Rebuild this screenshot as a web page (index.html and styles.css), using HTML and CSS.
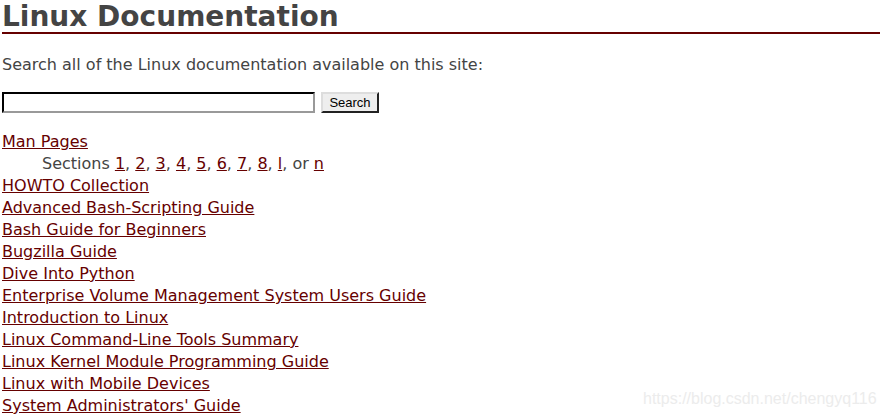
FILE: index.html
```html
<!DOCTYPE html>
<html>
<head>
<meta charset="utf-8">
<title>Linux Documentation</title>
<link rel="stylesheet" href="styles.css">
</head>
<body>
<h1 class="title">Linux Documentation</h1>
<p class="intro">Search all of the Linux documentation available on this site:</p>
<form class="search">
  <input class="search-input" type="text">
  <button class="search-btn" type="button">Search</button>
</form>
<ul class="docs">
  <li><a href="#">Man Pages</a></li>
  <li class="sections">Sections <a href="#">1</a>, <a href="#">2</a>, <a href="#">3</a>, <a href="#">4</a>, <a href="#">5</a>, <a href="#">6</a>, <a href="#">7</a>, <a href="#">8</a>, <a href="#">l</a>, or <a href="#">n</a></li>
  <li><a href="#">HOWTO Collection</a></li>
  <li><a href="#">Advanced Bash-Scripting Guide</a></li>
  <li><a href="#">Bash Guide for Beginners</a></li>
  <li><a href="#">Bugzilla Guide</a></li>
  <li><a href="#">Dive Into Python</a></li>
  <li><a href="#">Enterprise Volume Management System Users Guide</a></li>
  <li><a href="#">Introduction to Linux</a></li>
  <li><a href="#">Linux Command-Line Tools Summary</a></li>
  <li><a href="#">Linux Kernel Module Programming Guide</a></li>
  <li><a href="#">Linux with Mobile Devices</a></li>
  <li><a href="#">System Administrators' Guide</a></li>
</ul>
<div class="watermark">https://blog.csdn.net/chengyq116</div>
</body>
</html>
```
FILE: styles.css
```css
html, body {
  margin: 0;
  padding: 0;
  background: #fff;
}
body {
  padding: 0 4px 0 2px;
  font-family: "DejaVu Sans", Verdana, sans-serif;
  font-size: 16px;
  color: #444;
  overflow: hidden;
}
.title {
  margin: 0;
  padding-top: 2px;
  font-size: 28px;
  font-weight: bold;
  line-height: 30px;
  color: #444;
  border-bottom: 2px solid #600;
}
.intro {
  margin: 20px 0 0 0;
  line-height: 22px;
}
.search {
  display: flex;
  align-items: center;
  gap: 6px;
  margin-top: 16px;
}
.search-input {
  box-sizing: border-box;
  width: 313px;
  height: 21px;
  margin: 0;
  padding: 0 2px;
  border: 2px inset #767676;
  border-color: #555 #999 #999 #555;
  background: #fff;
}
.search-btn {
  box-sizing: border-box;
  height: 21px;
  width: 58px;
  margin: 0;
  padding: 0;
  font-family: "Liberation Sans", Arial, sans-serif;
  font-size: 13px;
  color: #000;
  background: #eee;
  border: 2px outset #999;
  border-color: #ddd #777 #777 #ddd;
}
.docs {
  list-style: none;
  margin: 18px 0 0 0;
  padding: 0;
}
.docs li {
  line-height: 22px;
}
.docs a {
  color: #600;
  text-decoration: underline;
}
.sections {
  padding-left: 40px;
}
.watermark {
  position: absolute;
  left: 643px;
  top: 390px;
  font-family: "Liberation Sans", Arial, sans-serif;
  font-size: 16px;
  color: #ececec;
}
```
